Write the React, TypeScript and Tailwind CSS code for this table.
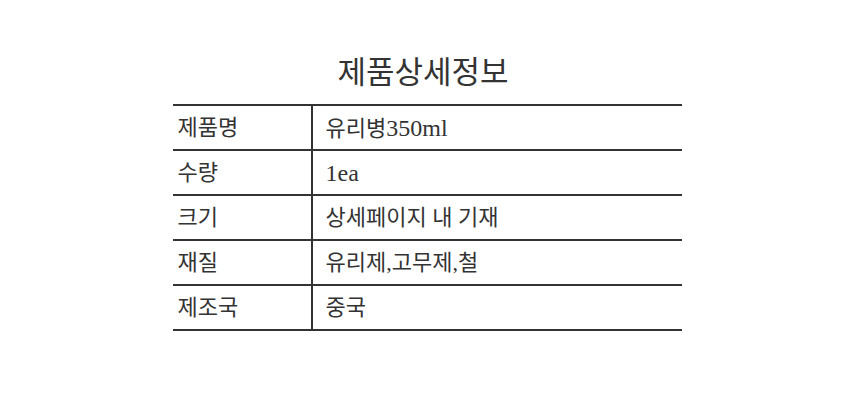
const rows: [string, string][] = [
  ['제품명', '유리병350ml'],
  ['수량', '1ea'],
  ['크기', '상세페이지 내 기재'],
  ['재질', '유리제,고무제,철'],
  ['제조국', '중국'],
];

// latin runs are set a touch larger so they sit like the serif in the original
function Mixed({ text }: { text: string }) {
  const parts = text.split(/([A-Za-z0-9]+)/).filter(Boolean);
  return (
    <>
      {parts.map((p, i) =>
        /^[A-Za-z0-9]+$/.test(p) ? (
          <span key={i} className="text-[24px]">
            {p}
          </span>
        ) : (
          <span key={i}>{p}</span>
        )
      )}
    </>
  );
}

export default function App() {
  return (
    <div
      className="flex h-[404px] w-[860px] flex-col items-center bg-white pt-[53px] text-[#333]"
      style={{ fontFamily: '"Liberation Serif", "Noto Sans CJK KR", serif' }}
    >
      <h2 className="mb-[12px] ml-[-14px] h-[39px] text-[31px] leading-[39px] font-normal">제품상세정보</h2>
      <div className="ml-[-6px] w-[509px] border-t-2 border-[#333]">
        {rows.map(([label, value]) => (
          <div key={label} className="flex h-[45px] border-b-2 border-[#333]">
            <div className="flex w-[140px] items-center border-r-2 border-[#333] pl-[5px] text-[22px]">
              {label}
            </div>
            <div className="flex flex-1 items-center pl-[13px] text-[22px]">
              <span>
                <Mixed text={value} />
              </span>
            </div>
          </div>
        ))}
      </div>
    </div>
  );
}
